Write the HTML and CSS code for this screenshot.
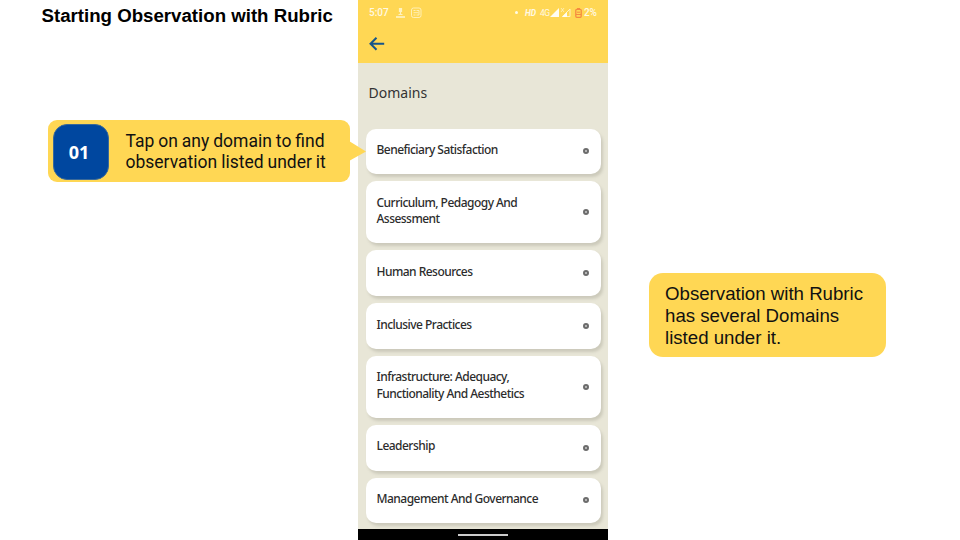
FILE: index.html
```html
<!DOCTYPE html>
<html lang="en">
<head>
<meta charset="utf-8">
<title>Starting Observation with Rubric</title>
<link rel="stylesheet" href="styles.css">
</head>
<body>
<main class="slide">
  <section class="left">
    <h1 class="title">Starting Observation with Rubric</h1>
    <div class="step">
      <span class="step-number">01</span>
      <p class="step-text">Tap on any domain to find<br>observation listed under it</p>
      <svg class="pointer" width="17" height="20" viewBox="0 0 17 20"><path d="M0 0 17 10.5 0 20Z" fill="#ffd754"/></svg>
    </div>
  </section>
  <section class="phone">
    <header class="appbar">
      <div class="status">
        <span class="clock">5:07</span>
        <svg class="notices" width="28" height="12" viewBox="0 0 28 12" fill="none" stroke="#fff2c0">
          <path d="M4.500 1v6M3.500 1.500h2v3h-2zM2.500 7.500h4" stroke-width="1.200"/><path d="M0 10h9" stroke-width="1.700"/>
          <rect x="15.500" y="1" width="9.500" height="9.500" rx="2" stroke-width=".9"/><path d="M17.500 3.500h2M20.500 3.500h2.500v4.500h-2.500M17.500 5.700h5M17.500 8h2" stroke-width=".9"/>
        </svg>
        <span class="dot"></span>
        <span class="hd">HD</span>
        <span class="net">4G</span>
        <svg class="signal" width="22" height="10" viewBox="0 0 22 10">
          <path d="M0 9 9 0v9Z" fill="#fffdf2"/><path d="M12.500 8.500 20 1v7.500Z" fill="none" stroke="#fff3c4"/><path d="m12 9 5-5v5Z" fill="#fffdf2"/><path d="m11 0 1.500 2L14 0M11 4l1.500-2L14 4" fill="none" stroke="#fff3c4" stroke-width=".8"/>
        </svg>
        <svg class="battery" width="7" height="10" viewBox="0 0 7 10" fill="none" stroke="#f58a40"><rect x=".8" y="1.300" width="5.400" height="8" rx="1" stroke-width="1.300"/><path d="M2 .5h3M2 4.200h3M1 6.500h5" stroke-width="1"/></svg>
        <span class="percent">2%</span>
      </div>
      <svg class="back" width="16" height="14" viewBox="0 0 16 14" fill="none" stroke="#15558a" stroke-width="2"><path d="M7.500 .8 1.500 6.800l6 6M1.500 6.800h13.700"/></svg>
    </header>
    <div class="content">
      <h2 class="heading">Domains</h2>
      <ul class="domains">
        <li class="card"><span>Beneficiary Satisfaction</span><i class="ring"></i></li>
        <li class="card tall"><span>Curriculum, Pedagogy And<br>Assessment</span><i class="ring"></i></li>
        <li class="card"><span>Human Resources</span><i class="ring"></i></li>
        <li class="card"><span>Inclusive Practices</span><i class="ring"></i></li>
        <li class="card tall"><span>Infrastructure: Adequacy,<br>Functionality And Aesthetics</span><i class="ring"></i></li>
        <li class="card"><span>Leadership</span><i class="ring"></i></li>
        <li class="card"><span>Management And Governance</span><i class="ring"></i></li>
      </ul>
    </div>
    <footer class="navbar"><span class="handle"></span></footer>
  </section>
  <aside class="right">
    <p class="note">Observation with Rubric<br>has several Domains<br>listed under it.</p>
  </aside>
</main>
</body>
</html>
```
FILE: styles.css
```css
* { box-sizing: border-box; }
body, h1, h2, p, ul { margin: 0; padding: 0; }
body { background: #fff; }
.slide {
  display: grid;
  grid-template-columns: 358px 250px 1fr;
  width: 960px;
  height: 540px;
  overflow: hidden;
}
.left { padding-top: 5px; }
.title {
  margin-left: 41.5px;
  font: bold 18.67px/21px "Liberation Sans", Arial, sans-serif;
  color: #000;
  white-space: nowrap;
}
.step {
  position: relative;
  z-index: 2;
  display: flex;
  align-items: center;
  width: 302px;
  height: 62px;
  margin: 94px 0 0 48px;
  padding: 2px 0 0 4.500px;
  border-radius: 9px;
  background: #ffd754;
}
.step-number {
  display: flex;
  align-items: center;
  justify-content: center;
  width: 56px;
  height: 56px;
  padding-right: 3px;
  border: 1px solid #39699a;
  border-radius: 14px;
  background: #00479f;
  color: #fff;
  font: bold 18px/22px "Open Sans", sans-serif;
}
.step-text {
  margin-left: 17px;
  font: 17.500px/21px Roboto, sans-serif;
  word-spacing: -.4px;
  color: #111;
  white-space: nowrap;
}
.pointer { position: absolute; left: 301px; top: 21px; }
.phone {
  display: flex;
  flex-direction: column;
  height: 540px;
  background: #e8e6d7;
}
.appbar { height: 63px; background: #ffd754; }
.status {
  display: flex;
  align-items: center;
  height: 25px;
  padding: 0 11px;
  color: #fff9e2;
  font: 500 9px/12px Roboto, sans-serif;
}
.clock { width: 27px; font-size: 10px; }
.notices { flex: none; }
.dot { width: 3px; height: 3px; margin-left: 91px; border-radius: 50%; background: #fffbe6; }
.hd { width: 15px; margin-left: 7px; font-style: italic; font-size: 8.500px; font-weight: 700; }
.net { width: 10px; font-size: 8.500px; font-weight: 400; letter-spacing: -.6px; }
.signal { flex: none; }
.battery { flex: none; margin-left: 3px; }
.percent { margin-left: 2px; font-size: 10px; letter-spacing: -.3px; }
.back { display: block; margin: 12px 0 0 10.500px; }
.content { height: 466px; padding: 20px 6.600px 0 7.500px; }
.heading {
  margin-left: 3px;
  font: 400 14px/20px "Noto Sans", sans-serif;
  color: #333;
}
.domains {
  display: grid;
  gap: 7px;
  margin-top: 25.600px;
  list-style: none;
}
.card {
  display: flex;
  align-items: center;
  justify-content: space-between;
  height: 45.600px;
  padding: 0 12px 2px 11px;
  border-radius: 10px;
  background: #fff;
  box-shadow: 2px 3px 3px #cccabb;
  color: #2c2c2c;
  font: 500 12px/16.600px "Noto Sans", sans-serif;
  letter-spacing: -.53px;
  white-space: nowrap;
}
.tall { height: 62.300px; }
.ring {
  width: 6px;
  height: 6px;
  margin-top: 1.500px;
  border: 2px solid #6c6c6c;
  border-radius: 50%;
  background: #ccc;
}
.navbar {
  display: flex;
  justify-content: center;
  height: 11px;
  padding-top: 5px;
  background: #000;
}
.handle { width: 50px; height: 2px; background: #ccc; }
.right { padding: 272.500px 0 0 41px; }
.note {
  width: 237px;
  height: 84.500px;
  padding: 10px 16px;
  border-radius: 14px;
  background: #ffd754;
  color: #111;
  font: 18.670px/22px "Liberation Sans", Arial, sans-serif;
  white-space: nowrap;
}
```
